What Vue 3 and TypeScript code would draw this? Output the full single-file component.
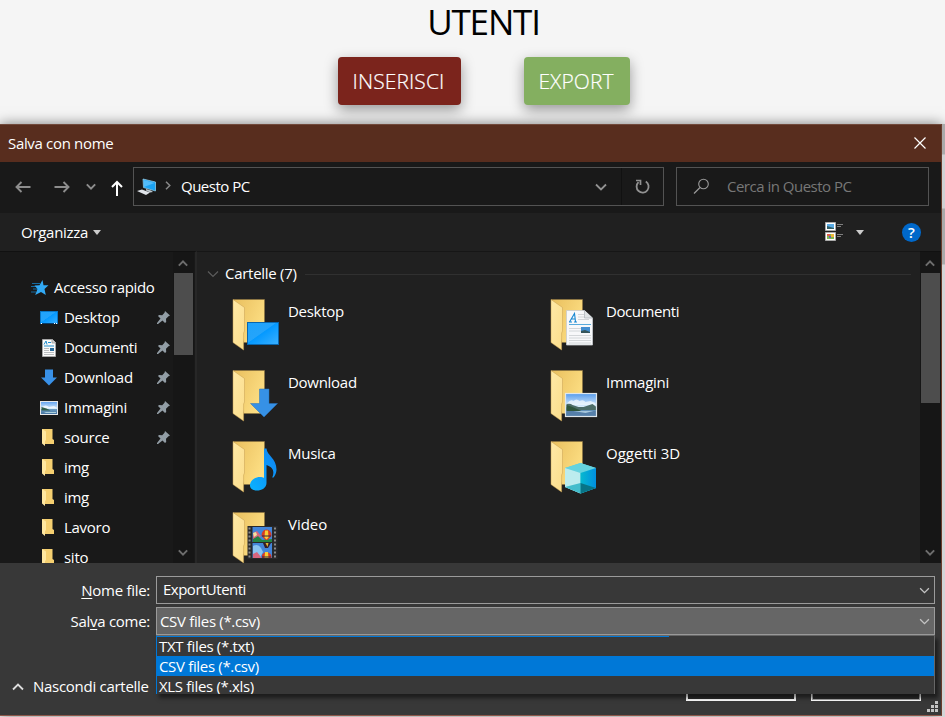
<script setup lang="ts">
import { ref } from 'vue'

interface QuickItem { label: string; icon: string; pinned: boolean }
interface FolderItem { label: string; icon: string }

const quickItems: QuickItem[] = [
  { label: 'Desktop', icon: 'mini-desktop', pinned: true },
  { label: 'Documenti', icon: 'mini-document', pinned: true },
  { label: 'Download', icon: 'mini-download', pinned: true },
  { label: 'Immagini', icon: 'mini-image', pinned: true },
  { label: 'source', icon: 'mini-folder', pinned: true },
  { label: 'img', icon: 'mini-folder', pinned: false },
  { label: 'img', icon: 'mini-folder', pinned: false },
  { label: 'Lavoro', icon: 'mini-folder', pinned: false },
  { label: 'sito', icon: 'mini-folder', pinned: false },
]

const folders: FolderItem[] = [
  { label: 'Desktop', icon: 'big-desktop' },
  { label: 'Documenti', icon: 'big-document' },
  { label: 'Download', icon: 'big-download' },
  { label: 'Immagini', icon: 'big-image' },
  { label: 'Musica', icon: 'big-music' },
  { label: 'Oggetti 3D', icon: 'big-cube' },
  { label: 'Video', icon: 'big-video' },
]

const fileTypes: string[] = ['TXT files (*.txt)', 'CSV files (*.csv)', 'XLS files (*.xls)']
const selectedType = ref<string>('CSV files (*.csv)')
const fileName = ref<string>('ExportUtenti')
</script>

<template>
  <div class="page">
    <svg class="defs" width="0" height="0" aria-hidden="true">
      <defs>
        <linearGradient id="g-back" x1="0" y1="0" x2="1" y2="0.6">
          <stop offset="0" stop-color="#e9bf5e" /><stop offset="1" stop-color="#fddf84" />
        </linearGradient>
        <linearGradient id="g-flap" x1="0" y1="0" x2="1" y2="1">
          <stop offset="0" stop-color="#ffe9a6" /><stop offset="1" stop-color="#fbdd8b" />
        </linearGradient>
        <linearGradient id="g-blue" x1="0" y1="0" x2="1" y2="1">
          <stop offset="0" stop-color="#1fa3fa" /><stop offset="0.46" stop-color="#24a4fb" />
          <stop offset="0.48" stop-color="#0499ff" /><stop offset="1" stop-color="#3bb0ff" />
        </linearGradient>
        <linearGradient id="g-sky" x1="0" y1="0" x2="0" y2="1">
          <stop offset="0" stop-color="#5c9fee" /><stop offset="0.55" stop-color="#dceefb" />
          <stop offset="0.6" stop-color="#6d9cc0" /><stop offset="1" stop-color="#416f9e" />
        </linearGradient>
        <linearGradient id="g-note" x1="0" y1="1" x2="1" y2="0">
          <stop offset="0" stop-color="#0ab2ff" /><stop offset="1" stop-color="#0f83f2" />
        </linearGradient>
        <linearGradient id="g-cube" x1="0" y1="0" x2="1" y2="0">
          <stop offset="0" stop-color="#08b9cf" /><stop offset="1" stop-color="#008fe0" />
        </linearGradient>
      </defs>
      <symbol id="folder" viewBox="0 0 50 54">
        <path d="M1.500 1.500h31v43h-21z" fill="url(#g-back)" stroke="#8d7440" stroke-width=".6" />
        <path d="M1 1.500 12.500 9.500V33l-.9 2v17L1 44.500z" fill="url(#g-flap)" stroke="#c79f50" stroke-width=".5" />
      </symbol>
      <symbol id="big-desktop" viewBox="0 0 50 54">
        <rect x="15.500" y="24.500" width="31" height="22" fill="url(#g-blue)" stroke="#0866ae" />
      </symbol>
      <symbol id="big-document" viewBox="0 0 50 54">
        <path d="M16.500 12.500h18l8 7.500v27h-26z" fill="#f7f8fa" stroke="#c8cbcf" stroke-width=".8" />
        <path d="M34.500 12.500v7.500h8" fill="#dfe3e6" stroke="#a9afb4" stroke-width=".7" />
        <path d="M19.500 24 24.500 15.500l1 8M21 21h4M19 24h3M24 24h3" fill="none" stroke="#1687d2" stroke-width="1.100" />
        <path d="M28 16.500h6M28 19h6M28 21.500h11M19 30.500h12M19 33h12M19 37.500h22M19 40h22M19 42.500h22M19 45h22" stroke="#c9cdd1" stroke-width=".8" />
        <path d="M19 26.500h22" stroke="#58aadc" />
        <rect x="31" y="29" width="9" height="6" fill="#438ed0" /><path d="M31 33l4-1 5 2v1h-9z" fill="#35555b" />
      </symbol>
      <symbol id="big-download" viewBox="0 0 50 54">
        <path d="M27.500 20H37v14.500h8.500L32 48 18.500 34.500h9z" fill="#3691e6" stroke="#2671b8" stroke-width=".5" />
      </symbol>
      <symbol id="big-image" viewBox="0 0 50 54">
        <g transform="translate(-.5 0)">
          <rect x="16.500" y="25" width="31" height="23" fill="url(#g-sky)" />
          <path d="M18 34q3-4 6-2 3-3 6 0 4-2 6 1l5-1 5 2v2H18z" fill="#f3f9fd" opacity=".75" />
          <path d="M17 35q4-1 6 1l6 2 5 0 9-3 4 3v3H17z" fill="#4d6d68" />
          <path d="M17 36l6 2 9 4H17z" fill="#2f563c" />
          <path d="M17 42h30v5H17z" fill="#557fa9" /><path d="M24 42h20l-8 2z" fill="#a6c6dc" />
          <rect x="16" y="24.500" width="31" height="23" fill="none" stroke="#dfe6eb" stroke-width="1.200" />
        </g>
      </symbol>
      <symbol id="big-music" viewBox="0 0 50 54">
        <path d="M32 8.500h2.500c.5 7 10 10 10 21 0 3-1.500 6.500-3 8h-1.300c2.200-5 1.800-10-5.700-12.500V43c0 5-5 7.500-9.500 7.500-4 0-7-1.700-7-5 0-5 5-8.500 10-8.500 1.500 0 3 .3 4 1z" fill="url(#g-note)" />
      </symbol>
      <symbol id="big-cube" viewBox="0 0 50 54">
        <path d="M15 28l15.500-5L46 28v20l-15.500 5.500L15 47z" fill="#5ccddc" />
        <path d="M15 28l15.500-5L46 28l-15.500 5z" fill="#65d3df" /><path d="M15 28l15.500 5v20.500L15 47z" fill="#bcecee" />
        <path d="M30.500 33L46 28v20l-15.500 5.500z" fill="url(#g-cube)" />
        <path d="M15 47l15.500-4v10.500z" fill="#43bdcc" /><path d="M30.500 43L46 48l-15.500 5.500z" fill="#087487" />
      </symbol>
      <symbol id="big-video" viewBox="0 0 50 54">
        <rect x="15.500" y="15" width="30" height="33" fill="#29292a" />
        <path d="M17.500 16.500v31M43 16.500v31" stroke="#8a8a8a" stroke-width="2" stroke-dasharray="2 2" />
        <path d="M20.500 16h19.500v15H20.500zM20.500 32h19.500v15H20.500z" fill="#4385d9" />
        <path d="M21 22l4-2 4 5-3 3 4 3h-9z" fill="#d7657e" /><path d="M21 22l3-1 1 3-3 2z" fill="#f2e3a0" /><path d="M21 28l5-3 4 4 10-1v3H21z" fill="#248343" />
        <path d="M21 35q5-3 8 2l2 4-3 6h-7z" fill="#8ac4f0" />
        <path d="M21 43l4-2 4 5v1h-8z" fill="#d7657e" />
        <path d="M29.500 25q0-6 5-6.500 5 .5 5 6.500l-4 4h-2z" fill="#db3921" /><path d="M33 19.500h3l.5 7-2 2-2-2z" fill="#f7cd36" />
        <path d="M31 32h8l-3 5h-3z" fill="#351d29" /><path d="M33.500 32h3l-1 4z" fill="#e2b632" />
        <path d="M30 47q-1-5 4.500-6 5.500 1 5 6z" fill="#db3921" /><path d="M33 41h3l.5 6h-4z" fill="#f7cd36" />
        <path d="M30 25h9M30 46h9" stroke="#302943" />
      </symbol>
      <symbol id="mini-desktop" viewBox="0 0 18 18">
        <rect x=".5" y="2.500" width="17" height="12" fill="url(#g-blue)" stroke="#0977c7" />
        <path d="M1 14.500h16" stroke="#073e6d" /><path d="M1 14.500h1M14 14.500h1M16 14.500h1" stroke="#fff" />
      </symbol>
      <symbol id="mini-document" viewBox="0 0 18 18">
        <path d="M2.500.5h10l3 3v14h-13z" fill="#fafafa" stroke="#a7a7a7" /><path d="M12 .5V4h4" fill="#d4d4d4" stroke="#8a8a8a" stroke-width=".7" />
        <path d="M4 5.500 6 2l1 3.500M8 3.500h3M4 7h10" stroke="#218fce" fill="none" />
        <path d="M4 9.500h5M4 11.500h5M4 13.500h10M4 15.500h10" stroke="#a9adb0" stroke-width=".8" /><path d="M10 9h4v3h-4z" fill="#286a9a" />
      </symbol>
      <symbol id="mini-download" viewBox="0 0 18 18"><path d="M5 .5h8v8h4l-8 8-8-8h4z" fill="#3991e8" /></symbol>
      <symbol id="mini-image" viewBox="0 0 18 18">
        <rect x=".5" y="2.500" width="17" height="13" fill="url(#g-sky)" />
        <path d="M2 8q4-3 7 0l5-1 3 2H2z" fill="#fff" opacity=".7" /><path d="M1.500 8l5 1.500 4 2h-9z" fill="#315e4b" /><path d="M6 13h10v1H4z" fill="#abd0dc" />
        <rect x=".5" y="2.500" width="17" height="13" fill="none" stroke="#e8e8e8" />
      </symbol>
      <symbol id="mini-folder" viewBox="0 0 18 18">
        <path d="M2 0h10.500v10l1.500 1v4H4z" fill="#f5cf70" /><path d="M2 0l4 2.500V11l-1 1v5L2 14.500z" fill="#ffe7a0" />
      </symbol>
      <symbol id="chevron-down" viewBox="0 0 12 8"><path d="M1 1.500l5 5 5-5" fill="none" stroke="currentColor" stroke-width="var(--w, 1.800)" /></symbol>
      <symbol id="chevron-up" viewBox="0 0 12 8"><path d="M1 6.500l5-5 5 5" fill="none" stroke="currentColor" stroke-width="var(--w, 1.800)" /></symbol>
    </svg>

    <header class="top">
      <h1>UTENTI</h1>
      <div class="actions">
        <button class="action insert"><span>INSERISCI</span></button>
        <button class="action export"><span>EXPORT</span></button>
      </div>
    </header>

    <div class="stage">
      <section class="dialog">
        <div class="titlebar">
          <span class="t-title">Salva con nome</span>
          <svg width="12" height="12" viewBox="0 0 12 12"><path d="M.5.5l11 11M11.500.5l-11 11" stroke="#fff" stroke-width="1.200" /></svg>
        </div>

        <div class="nav">
          <div class="arrows">
            <svg class="back" width="16" height="12" viewBox="0 0 16 12"><path d="M15.500 6H1.500M6.500 1l-5 5 5 5" fill="none" stroke="#8d8d8d" stroke-width="1.900" /></svg>
            <svg class="forward" width="16" height="12" viewBox="0 0 16 12"><path d="M.5 6h14M9.500 1l5 5-5 5" fill="none" stroke="#8d8d8d" stroke-width="1.900" /></svg>
            <svg class="recent" width="10" height="7"><use href="#chevron-down" /></svg>
            <svg class="up" width="12" height="16" viewBox="0 0 12 16"><path d="M6 16V2M1 7l5-5 5 5" fill="none" stroke="#fff" stroke-width="2" /></svg>
          </div>
          <div class="address">
            <svg class="pc" width="19" height="18" viewBox="0 0 19 18">
              <path d="M6 1l12.500 3v9L6.500 9.500z" fill="#1aa2f2" stroke="#9ed5ef" stroke-width=".7" /><path d="M7 2l10.500 3L7 9z" fill="#52bcfa" />
              <path d="M9 11l5 1.500 2 1.500-3 .5-4-2z" fill="#bcc7ce" /><path d="M0 13l5-1.500 8 3L9 17z" fill="#e0e4e9" />
            </svg>
            <svg class="crumb" width="6" height="9" viewBox="0 0 6 9"><path d="M1 .7l3.800 3.800L1 8.300" fill="none" stroke="#888" stroke-width="1.500" /></svg>
            <span class="t-pc">Questo PC</span>
            <svg class="drop" width="12" height="8"><use href="#chevron-down" /></svg>
            <div class="refresh">
              <svg width="15" height="15" viewBox="0 0 15 15"><path d="M10.800 2.500A6 6 0 1 1 3.500 3.200" fill="none" stroke="#929292" stroke-width="1.800" /><path d="M1 1.500h4.500V6" fill="none" stroke="#929292" stroke-width="1.700" /></svg>
            </div>
          </div>
          <div class="search">
            <svg width="17" height="17" viewBox="0 0 17 17"><circle cx="10.500" cy="6" r="4.800" fill="none" stroke="#9a9a9a" stroke-width="1.100" /><path d="M7 9.500L1 15.500" stroke="#9a9a9a" stroke-width="1.200" /></svg>
            <span class="t-search">Cerca in Questo PC</span>
          </div>
        </div>

        <div class="toolbar">
          <span class="t-org">Organizza</span>
          <i class="caret"></i>
          <svg class="view" width="18" height="19" viewBox="0 0 18 19">
            <path d="M.5.500h10v8H.5zM.5 10.500h10v8H.5z" fill="#fff" stroke="#aaa" />
            <path d="M2 2h7v5H2z" fill="#58aae5" /><path d="M2 4l7 2v1H2z" fill="#315e67" /><path d="M2 12h7v5H2z" fill="#80b650" /><path d="M2 12h3v2H2z" fill="#df5d4a" /><path d="M6 12h3v3H6z" fill="#f0b73a" /><path d="M4 14h2v2H4z" fill="#6a5fb6" />
            <path d="M12 2.500h6M12 4.500h4M12 12.500h6M12 14.500h4" stroke="#8a8a8a" stroke-width=".9" />
          </svg>
          <i class="caret view-caret"></i>
          <span class="help">?</span>
        </div>

        <div class="content">
          <aside class="sidebar">
            <div class="tree">
              <div class="row root">
                <svg width="18" height="16" viewBox="0 0 18 16"><path d="M1 3.500h8M0 6.500h6M2 9h5M0 12h5" stroke="#147dc0" stroke-width=".8" /><path d="M11.500 0l1 5.200h5L13.500 9l1.300 6-4.800-3-5.800 3L6.500 9 3.500 5.500l5-.3z" fill="#32aaf5" /></svg>
                <span class="t-root">Accesso rapido</span>
              </div>
              <div v-for="(item, i) in quickItems" :key="i" class="row">
                <svg class="mini" width="18" height="18"><use :href="'#' + item.icon" /></svg>
                <span :class="'q-' + item.label.toLowerCase()">{{ item.label }}</span>
                <svg v-if="item.pinned" class="pin" width="13" height="13" viewBox="0 0 13 13"><path d="M8 0l5 4.500-1.500.7-2.500 2.600.2 3.200-1.200 1-2.500-2.500L1 13l-1 0 0-1 3.500-4.500L1 5l1-1 3.200.3L7.500 1.800z" fill="#929da5" /></svg>
              </div>
            </div>
            <div class="scroll">
              <svg width="10" height="7"><use href="#chevron-up" /></svg>
              <div class="track"><div class="thumb"></div></div>
              <svg width="10" height="7"><use href="#chevron-down" /></svg>
            </div>
          </aside>

          <main class="files">
            <div class="group">
              <svg width="12" height="8"><use href="#chevron-down" /></svg>
              <span class="t-group">Cartelle (7)</span>
              <hr />
            </div>
            <div class="grid">
              <div v-for="f in folders" :key="f.label" class="item">
                <svg width="50" height="54" viewBox="0 0 50 54"><use href="#folder" /><use :href="'#' + f.icon" /></svg>
                <span :class="'f-' + f.label.toLowerCase().replace(' ', '-')">{{ f.label }}</span>
              </div>
            </div>
          </main>
          <div class="scroll main-scroll">
            <svg width="10" height="7"><use href="#chevron-up" /></svg>
            <div class="track"><div class="thumb"></div></div>
            <svg width="10" height="7"><use href="#chevron-down" /></svg>
          </div>
        </div>

        <footer class="bottom">
          <div class="field">
            <label class="t-name"><u>N</u>ome file:</label>
            <div class="box name"><span class="t-file">{{ fileName }}</span><svg width="11" height="7"><use href="#chevron-down" /></svg></div>
          </div>
          <div class="field">
            <label class="t-as">Sal<u>v</u>a come:</label>
            <div class="box type">
              <span class="t-opt">{{ selectedType }}</span><svg width="11" height="7"><use href="#chevron-down" /></svg>
              <div class="list">
                <div v-for="t in fileTypes" :key="t" class="option" :class="{ active: t === selectedType }" @click="selectedType = t"><span class="t-opt">{{ t }}</span></div>
              </div>
            </div>
          </div>
          <div class="commands">
            <svg width="12" height="8"><use href="#chevron-up" /></svg>
            <span class="t-hide">Nascondi cartelle</span>
            <div class="cmd save"></div>
            <div class="cmd cancel"></div>
          </div>
          <svg class="grip" width="11" height="11" viewBox="0 0 11 11"><path d="M8 0h3v3H8zM4 4h3v3H4zM8 4h3v3H8zM0 8h3v3H0zM4 8h3v3H4zM8 8h3v3H8z" fill="#c4c4c4" /></svg>
        </footer>
      </section>
      <div class="behind"></div>
    </div>
  </div>
</template>

<style>
body { background: #f5f5f5; overflow: hidden; }
</style>

<style scoped>
* { box-sizing: border-box; }
.page { width: 945px; height: 717px; overflow: hidden; background: #f5f5f5; font-family: "Open Sans", "Noto Sans", sans-serif; font-size: 15px; letter-spacing: -.28px; line-height: 20px; color: #fff; white-space: nowrap; }
.defs { display: block; height: 0; }
svg { flex: none; display: block; }
.top { height: 124px; display: flex; flex-direction: column; align-items: center; }
h1 { margin: 0; padding-left: 22px; height: 57px; line-height: 44px; font-size: 35px; font-weight: 400; color: #000; letter-spacing: -1.150px; }
.actions { display: flex; gap: 63px; padding-left: 23px; }
.action { height: 48px; border: 0; border-radius: 4px; padding: 0 2px 0 0; color: #fff; font-family: inherit; font-weight: 300; font-size: 21px; letter-spacing: .08px; -webkit-text-stroke: .2px #fff; box-shadow: 0 5px 14px rgba(0, 0, 0, .38); }
.insert { width: 123px; background: #7b241c; }
.export { width: 106px; background: #84af60; }
.stage { display: flex; height: 593px; }
.dialog { width: 942px; height: 592px; border-right: 1px solid #6b3d2c; border-bottom: 1px solid #8c5649; background: #191919; box-shadow: 0 0 12px rgba(0, 0, 0, .5); display: flex; flex-direction: column; }
.behind { flex: 1; background: linear-gradient(#aaa 0 30px, #d0d2d4 31px 84px, #aaa 85px 140px, #d3d5d7 141px); }
.titlebar { height: 38px; background: #582d1e; border-top: 1px solid #71493b; display: flex; justify-content: space-between; align-items: center; padding: 0 15px 1px 8px; }
.nav { height: 51px; display: flex; align-items: center; padding: 0 12px 2px 0; }
.arrows { width: 133px; display: flex; align-items: center; padding: 0 0 0 15px; color: #8d8d8d; }
.forward { margin-left: 23px; }
.recent { margin-left: 16px; --w: 2.4; }
.up { margin: 2px 0 0 15px; }
.address { width: 531px; height: 39px; border: 1px solid #535353; display: flex; align-items: center; padding-left: 3px; }
.address span, .search span, .group span, .toolbar .t-org, .row span { padding-bottom: 2px; }
.crumb { margin: 0 10px 3px 9px; }
.drop { margin-left: auto; color: #929292; }
.refresh { width: 42px; height: 37px; margin-left: 14px; border-left: 1px solid #111; display: flex; align-items: center; justify-content: center; }
.search { margin-left: 12px; flex: 1; height: 39px; border: 1px solid #535353; display: flex; align-items: center; gap: 17px; padding-left: 16px; color: #777; }
.toolbar { height: 38px; background: #202020; display: flex; align-items: center; padding: 1px 0 0 21px; }
.caret { border: 4.5px solid transparent; border-top: 5px solid #ccc; border-bottom: 0; margin-left: 5px; }
.view { margin-left: auto; margin-top: -2px; }
.view-caret { margin-left: 13px; }
.help { margin: -1px 20px 0 38px; width: 19px; height: 19px; border-radius: 50%; background: #0068ca; text-align: center; line-height: 19px; font-weight: 600; font-size: 15px; letter-spacing: 0; }
.content { height: 312px; display: flex; overflow: hidden; }
.sidebar { width: 197px; display: flex; border-right: 2px solid #272727; border-top: 1px solid #111; }
.tree { width: 173px; padding-top: 21px; }
.row { height: 30px; display: flex; align-items: center; padding-left: 40px; }
.root { padding-left: 31px; }
.root span { margin-left: 5px; }
.row .mini { margin-right: 6px; }
.row .pin { margin: -2px 3px 0 auto; }
.scroll { width: 21px; display: flex; flex-direction: column; align-items: center; padding: 8px 0 7px; background: #161616; color: #6d6d6d; --w: 2.4; }
.scroll > svg { margin-right: 1px; }
.track { flex: 1; width: 19px; padding-top: 6px; }
.thumb { width: 19px; height: 82px; background: #4d4d4d; }
.files { width: 723px; background: #202020; border-top: 1px solid #161616; }
.group { height: 45px; display: flex; align-items: center; padding: 0 9px 2px 10px; color: #fff; }
.group svg { color: #5c5c5c; --w: 1.2; margin-right: 6px; }
hr { flex: 1; border: 0; border-top: 1px solid #303030; margin: 1px 0 0 8px; }
.grid { display: grid; grid-template-columns: 318px 318px; grid-auto-rows: 71px; padding-left: 35px; }
.item { display: flex; padding-top: 1px; }
.item span { margin: 3px 0 0 6px; }
.main-scroll { border-top: 1px solid #111; }
.main-scroll .thumb { height: 130px; }
.bottom { position: relative; height: 152px; background: #383838; padding-top: 13px; }
.field { height: 28px; margin-bottom: 3px; display: flex; align-items: center; }
.field label { width: 156px; padding: 0 6px 1px 0; text-align: right; }
u { text-underline-offset: 2px; text-decoration-thickness: 1px; }
.box { position: relative; width: 779px; height: 28px; border: 1px solid #9b9b9b; display: flex; align-items: center; justify-content: space-between; padding: 0 4px 0 6px; color: #fff; }
.box > svg { color: #c4c4c4; --w: 1.5; }
.name > .t-file { padding-bottom: 2px; }
.type { background: #666; padding-left: 3px; }
.list { position: absolute; z-index: 2; left: -1px; top: 27px; width: 779px; height: 59px; overflow: hidden; background: #383838; border: 1px solid #666; border-left-color: #0078d7; border-bottom: 0; box-shadow: 3px 4px 4px rgba(0, 0, 0, .5); background-image: linear-gradient(#0078d7, #0078d7); background-size: 512px 1px; background-repeat: no-repeat; }
.option { height: 20px; line-height: 20px; padding-left: 2px; }
.active { background: #0078d7; }
.commands { height: 30px; display: flex; align-items: center; padding: 0 0 0 12px; margin-top: 36px; }
.commands > svg { color: #ddd; margin-top: 2px; margin-right: 9px; }
.commands > .t-hide { width: 130px; }
.cmd { height: 30px; margin-top: 0; border: 2px solid #fff; background: #2b2b2b; }
.save { width: 110px; margin-left: auto; }
.cancel { width: 110px; margin-left: 15px; margin-right: 20px; border-width: 1px; box-shadow: inset 0 0 0 1px #aaa; }
.grip { position: absolute; right: 3px; bottom: 3px; }
.t-title, .t-root, .t-opt { letter-spacing: -.33px; }
.t-pc { letter-spacing: -.5px; }
.t-search { letter-spacing: -.5px; }
.t-file { letter-spacing: -.5px; }
.q-documenti, .f-documenti { letter-spacing: -.42px; }
.f-oggetti-3d { letter-spacing: 0; }
.f-video { letter-spacing: -.05px; }
</style>
